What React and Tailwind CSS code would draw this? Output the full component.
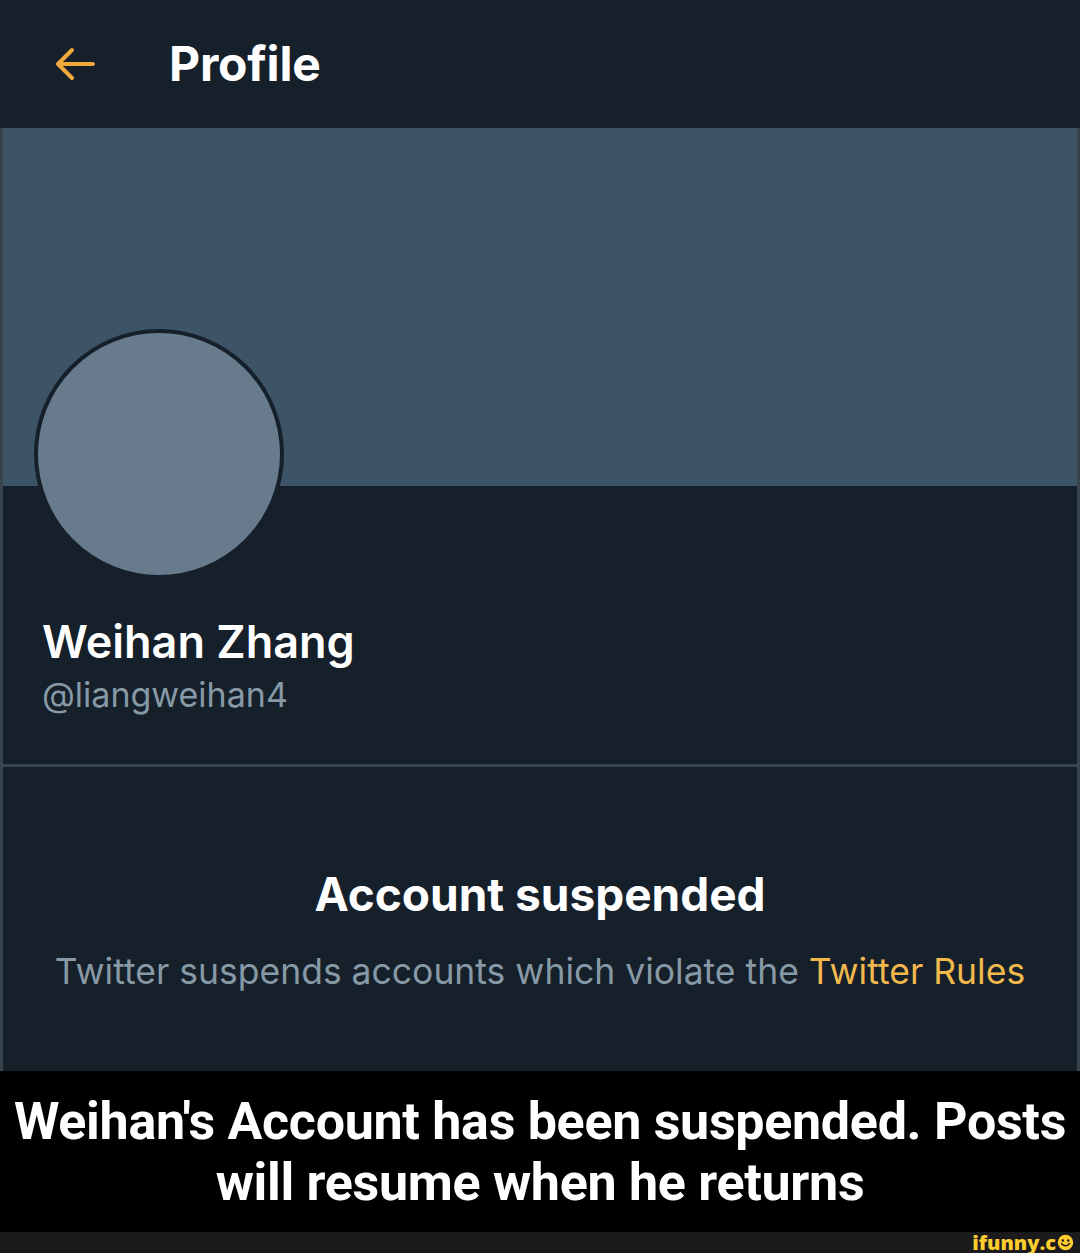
import React from 'react';

const BackArrow = () => (
  <svg width="44" height="36" viewBox="0 0 44 36" fill="none">
    <path d="M40 18 H5 M19 4 L5 18 L19 32" stroke="#f2a93b" strokeWidth="4" strokeLinecap="round" strokeLinejoin="round" />
  </svg>
);

const Smiley = () => (
  <svg width="17" height="17" viewBox="0 0 22 22">
    <circle cx="11" cy="11" r="10" fill="#ffcc2e" />
    <circle cx="7.5" cy="8.5" r="1.6" fill="#1b1b1d" />
    <circle cx="14.5" cy="8.5" r="1.6" fill="#1b1b1d" />
    <path d="M6 12.5 Q11 18 16 12.5" stroke="#1b1b1d" strokeWidth="2" fill="none" strokeLinecap="round" />
  </svg>
);

export default function App() {
  return (
    <div className="w-[1080px] h-[1253px] bg-[#15202b] overflow-hidden font-['Inter',sans-serif]">
      {/* header */}
      <header className="h-[128px] flex items-center bg-[#15202b]">
        <div className="ml-[53px] w-[44px] flex items-center">
          <BackArrow />
        </div>
        <h1 className="ml-[72px] text-[48px] font-bold text-white tracking-[-0.2px] leading-none">Profile</h1>
      </header>

      <main className="border-x-[3px] border-[#38444d]">
        <div className="h-[358px] bg-[#3d5467]" />

        <section className="h-[281px] flex flex-col border-b-[3px] border-[#38444d] px-[39px]">
          <div className="-mt-[157px] -ml-[8px] w-[250px] h-[250px] rounded-full border-[4px] border-[#15202b] bg-[#687b8c]" />
          <h2 className="mt-[38px] text-[45px] leading-[50px] font-semibold text-white">Weihan Zhang</h2>
          <p className="mt-[8px] text-[34px] leading-[40px] text-[#8899a6]">@liangweihan4</p>
        </section>

        <section className="h-[304px] flex flex-col items-center pt-[100px]">
          <h3 className="text-[46px] leading-[54px] font-bold text-white">Account suspended</h3>
          <p className="mt-[29px] text-[35.5px] leading-[44px] text-[#8899a6]">
            Twitter suspends accounts which violate the <span className="text-[#f2b84b]">Twitter Rules</span>
          </p>
        </section>
      </main>

      <div className="h-[161px] bg-black flex items-center justify-center text-center font-['Roboto',sans-serif] font-bold text-white text-[52px] leading-[61px] tracking-[-0.3px]">
        <p>Weihan's Account has been suspended. Posts<br />will resume when he returns</p>
      </div>

      <footer className="h-[21px] bg-[#1b1b1d] flex items-center justify-end pr-[6px]">
        <div className="flex items-center gap-[1px] text-[#ffcc2e] font-['Open_Sans',sans-serif] font-extrabold text-[20px] leading-[20px]">
          <span>ifunny.c</span>
          <Smiley />
        </div>
      </footer>
    </div>
  );
}
